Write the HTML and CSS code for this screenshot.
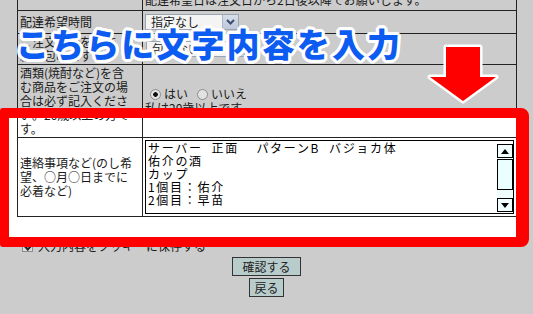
FILE: index.html
```html
<!DOCTYPE html>
<html lang="ja">
<head>
<meta charset="utf-8">
<title>注文フォーム</title>
<link rel="stylesheet" href="styles.css">
</head>
<body>
<div class="page">
  <table class="form">
    <colgroup><col class="c1"><col class="c2"></colgroup>
    <tr class="r0"><td class="lab"></td><td class="val">配達希望日は注文日から2日後以降でお願いします。</td></tr>
    <tr class="r1">
      <td class="lab">配達希望時間</td>
      <td class="val">
        <span class="sel sel-a"><select><option>指定なし</option></select><span class="dd"><svg width="9" height="6" viewBox="0 0 9 6"><path d="M1 1 L4.5 4.5 L8 1" fill="none" stroke="#3d4d6d" stroke-width="2"/></svg></span></span>
      </td>
    </tr>
    <tr class="r2">
      <td class="lab">ご注文の箱を包装<br>紙で包みますか？</td>
      <td class="val">
        <span class="sel sel-b"><select><option>包まない</option></select><span class="dd"><svg width="9" height="6" viewBox="0 0 9 6"><path d="M1 1 L4.5 4.5 L8 1" fill="none" stroke="#3d4d6d" stroke-width="2"/></svg></span></span>
      </td>
    </tr>
    <tr class="r3">
      <td class="lab">酒類(焼酎など)を含<br>む商品をご注文の場<br>合は必ず記入くださ<br>い。20歳以上の方で<br>す。</td>
      <td class="val">
        <label class="opt"><input class="radio" type="radio" name="age" checked>はい</label><label class="opt"><input class="radio" type="radio" name="age">いいえ</label><br>私は20歳以上です。
      </td>
    </tr>
    <tr class="r4">
      <td class="lab">連絡事項など(のし希<br>望、○月○日までに<br>必着など)</td>
      <td class="val val-ta">
        <div class="ta">
          <textarea class="memo">サーバー  正面    パターンB  バジョカ体
佑介の酒
カップ
1個目：佑介
2個目：早苗
3個目：
よろしくお願いします。</textarea>
          <div class="sb">
            <span class="sb-btn"><svg width="8" height="5" viewBox="0 0 8 5"><path d="M0 5 L4 0 L8 5 Z" fill="#000"/></svg></span>
            <span class="sb-thumb"></span>
            <span class="sb-track"></span>
            <span class="sb-btn"><svg width="8" height="5" viewBox="0 0 8 5"><path d="M0 0 L4 5 L8 0 Z" fill="#000"/></svg></span>
          </div>
        </div>
      </td>
    </tr>
  </table>
  <p class="cookie"><input class="check" type="checkbox" checked>入力内容をクッキーに保存する</p>
  <div class="actions">
    <button class="btn btn-wide" type="button">確認する</button>
    <button class="btn" type="button">戻る</button>
  </div>
</div>

<div class="hl-fill"></div>
<div class="hl-frame"></div>
<p class="note">こちらに文字内容を入力</p>
<svg class="arrow" width="80" height="70" viewBox="0 0 80 70">
  <path d="M21 7 L55 7 L55 37 L71 37 L38 61 L5 37 L21 37 Z" fill="#ff0000" stroke="#ffffff" stroke-width="5" stroke-linejoin="round" paint-order="stroke"/>
</svg>
</body>
</html>
```

FILE: styles.css
```css
html, body {
  margin: 0;
  padding: 0;
}

body {
  background: #cccccc;
  font-family: "Noto Sans CJK JP", sans-serif;
  font-size: 12px;
  line-height: 14px;
  color: #1a1a1a;
  overflow: hidden;
}

.page {
  margin-top: -12px;
}

.form {
  margin-left: 17px;
  width: 500px;
  border-collapse: collapse;
  table-layout: fixed;
}

.c1 { width: 125px; }

.form td {
  border: 1px solid #222;
  padding: 0 2px;
  vertical-align: middle;
  white-space: nowrap;
}

.r0 { height: 22px; }
.r1 { height: 23px; }
.r2 { height: 31px; }
.r3 { height: 73px; }
.r4 { height: 79px; }

.sel {
  display: inline-flex;
  height: 16px;
  box-sizing: border-box;
  border: 1px solid #9aa3b0;
  background: #f4f4f4;
  vertical-align: middle;
}
.sel-a { width: 94px; }
.sel-b { width: 99px; margin-left: 1px; }

.sel select {
  appearance: none;
  -webkit-appearance: none;
  border: 0;
  background: transparent;
  font: inherit;
  color: #1a1a1a;
  padding: 0 5px;
  flex: 1;
  min-width: 0;
  height: 14px;
  line-height: 14px;
}

.dd {
  width: 15px;
  height: 14px;
  background: linear-gradient(#d6deea, #bcc7d9);
  border-left: 1px solid #a9b4c6;
  display: flex;
  align-items: center;
  justify-content: center;
}

.opt {
  margin-right: 4px;
}

.radio {
  appearance: none;
  -webkit-appearance: none;
  width: 11px;
  height: 11px;
  margin: 0 3px 0 5px;
  border: 1px solid #8c8c8c;
  border-radius: 50%;
  background: #e2e2e2;
  vertical-align: -1px;
}
.radio:checked {
  background: radial-gradient(circle, #111 0 2px, #e2e2e2 2.6px);
}

.val-ta {
  padding: 2px 1px 2px 2px;
}

.ta {
  display: flex;
  align-items: flex-start;
  height: 74px;
  box-sizing: border-box;
  border: 1px solid #000;
  background: #fff;
}

.memo {
  flex: 1;
  min-width: 0;
  height: 66px;
  border: 0;
  margin: 0;
  padding: 0 0 0 2px;
  resize: none;
  overflow: hidden;
  background: transparent;
  font-family: "Noto Sans CJK JP", sans-serif;
  font-size: 12px;
  line-height: 13px;
  letter-spacing: 1.7px;
  color: #000;
  outline: none;
}

.sb {
  width: 16px;
  height: 68px;
  display: flex;
  flex-direction: column;
  margin: 3px 0 0;
  background: #eefcfc;
}

.sb-btn {
  height: 14px;
  box-sizing: border-box;
  border: 1px solid #000;
  background: #f2ffff;
  display: flex;
  align-items: center;
  justify-content: center;
}

.sb-thumb {
  height: 31px;
  box-sizing: border-box;
  margin-top: 1px;
  border: 1px solid #000;
  background: #eaffff;
}

.sb-track {
  flex: 1;
}

.cookie {
  margin: 22px 0 0 22px;
  display: flex;
  align-items: center;
}

.check {
  appearance: none;
  -webkit-appearance: none;
  width: 11px;
  height: 11px;
  margin: 0 5px 0 0;
  border: 1px solid #8c8c8c;
  background: #dcdcdc;
  position: relative;
}
.check:checked::after {
  content: "";
  position: absolute;
  left: 2px;
  top: 2px;
  width: 5px;
  height: 3px;
  border-left: 2px solid #222;
  border-bottom: 2px solid #222;
  transform: rotate(-45deg);
}

.actions {
  margin-top: 4px;
  display: flex;
  flex-direction: column;
  align-items: center;
  gap: 2px;
}

.btn {
  font-family: "Noto Sans CJK JP", sans-serif;
  font-size: 12px;
  line-height: 17px;
  height: 19px;
  padding: 0 4px;
  margin: 0;
  background: #b9cccc;
  border: 1px solid #333;
  border-radius: 0;
  color: #222;
}
.btn-wide {
  padding: 0 9px;
}

.hl-fill {
  position: absolute;
  z-index: -1;
  left: 9px;
  top: 118px;
  width: 507px;
  height: 119px;
  background: #fff;
}

.hl-frame {
  position: absolute;
  z-index: 2;
  left: 0;
  top: 108px;
  width: 507px;
  height: 119px;
  border-style: solid;
  border-color: #ff0000;
  border-width: 10px 13px 10px 9px;
  border-radius: 3px 8px 8px 3px;
}

.note {
  position: absolute;
  z-index: 3;
  left: 16px;
  top: 25px;
  margin: 0;
  font-family: "Noto Sans CJK JP", sans-serif;
  font-weight: 900;
  font-size: 33px;
  line-height: 36px;
  letter-spacing: 2.1px;
  color: #0d5cf2;
  white-space: nowrap;
  text-shadow:
    3px 0 #fff, -3px 0 #fff, 0 3px #fff, 0 -3px #fff,
    2px 2px #fff, -2px -2px #fff, 2px -2px #fff, -2px 2px #fff,
    3px 1px #fff, -3px 1px #fff, 3px -1px #fff, -3px -1px #fff,
    1px 3px #fff, -1px 3px #fff, 1px -3px #fff, -1px -3px #fff;
}

.arrow {
  position: absolute;
  z-index: 3;
  left: 425px;
  top: 40px;
}
```
